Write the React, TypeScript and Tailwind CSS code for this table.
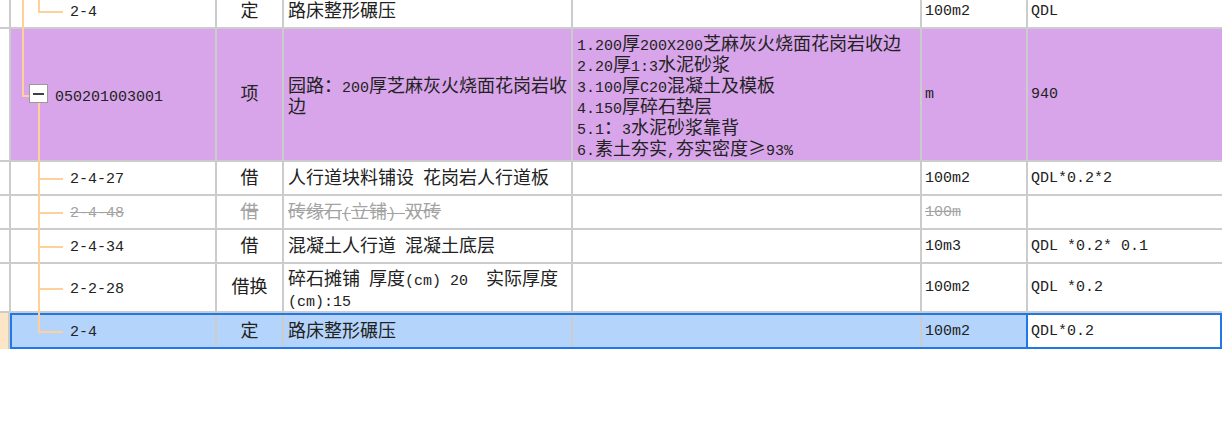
import React from "react";

function T({ s, muted }: { s: string; muted?: boolean }) {
  const parts = s.split(/([\u0000-\u00ff]+)/).filter((p) => p.length > 0);
  return (
    <>
      {parts.map((p, i) =>
        /^[\u0000-\u00ff]+$/.test(p) ? (
          <span
            key={i}
            className={
              muted
                ? "font-['Liberation_Mono',monospace] text-[15px] leading-none whitespace-pre line-through"
                : "font-['Liberation_Mono',monospace] text-[15px] leading-none whitespace-pre"
            }
          >
            {p}
          </span>
        ) : (
          <span key={i} className={muted ? "line-through" : ""}>
            {p}
          </span>
        )
      )}
    </>
  );
}

function Col0({ sel }: { sel?: boolean }) {
  return sel ? (
    <div className="w-[10px] shrink-0 h-full border-r-2 border-[#cccccc] bg-[#fde6c6]" />
  ) : (
    <div className="w-[11px] shrink-0 h-full border-r-2 border-[#cccccc] bg-white" />
  );
}

function ChildTree({
  code,
  last,
  root,
  sel,
  muted,
}: {
  code: string;
  last?: boolean;
  root?: boolean;
  sel?: boolean;
  muted?: boolean;
}) {
  return (
    <div
      className={
        sel
          ? "relative w-[205px] shrink-0 h-full border-r-2 border-[#cccccc] flex items-center pl-[58px] pb-[4px]"
          : "relative w-[206px] shrink-0 h-full border-r-2 border-[#cccccc] flex items-center pl-[59px] pb-[4px]"
      }
    >
      {root && <div className="absolute left-[11px] top-0 bottom-[-2px] w-[2px] bg-[#ffd09a]" />}
      {last ? (
        <div
          className={
            sel
              ? "absolute left-[26px] top-[-4px] h-[calc(50%+4px)] w-[2px] bg-[#ffd09a]"
              : "absolute left-[27px] top-0 h-1/2 w-[2px] bg-[#ffd09a]"
          }
        />
      ) : (
        <div className="absolute left-[27px] top-0 bottom-[-2px] w-[2px] bg-[#ffd09a]" />
      )}
      <div
        className={
          sel
            ? "absolute left-[26px] top-1/2 w-[25px] h-[2px] bg-[#ffd09a]"
            : "absolute left-[27px] top-1/2 w-[25px] h-[2px] bg-[#ffd09a]"
        }
      />
      <span className="relative">
        <T s={code} muted={muted} />
      </span>
    </div>
  );
}

const typeCls =
  "w-[67px] shrink-0 h-full border-r-2 border-[#cccccc] flex items-center justify-center pb-[4px]";
const nameCls =
  "w-[289px] shrink-0 h-full border-r-2 border-[#cccccc] flex flex-col justify-center pl-[4px] whitespace-nowrap";
const featCls =
  "w-[349px] shrink-0 h-full border-r-2 border-[#cccccc] flex flex-col justify-center pl-[4px] whitespace-nowrap";
const unitCls = "w-[106px] shrink-0 h-full border-r-2 border-[#cccccc] flex items-center pl-[3px]";
const exprCls = "flex-1 h-full flex items-center pl-[3px] whitespace-pre";

function Line({ s, muted }: { s: string; muted?: boolean }) {
  return (
    <div className="h-[21px] leading-[21px] whitespace-pre">
      <T s={s} muted={muted} />
    </div>
  );
}

type R = {
  code: string;
  type: string;
  name: string[];
  unit: string;
  expr: string;
  h: string;
  muted?: boolean;
  last?: boolean;
  root?: boolean;
};

function ChildRow({ r }: { r: R }) {
  return (
    <div
      className={
        (r.muted ? "text-[#a3a3a3] " : "text-[#222222] ") +
        "flex shrink-0 border-b-2 border-[#cccccc] bg-white " +
        r.h
      }
    >
      <Col0 />
      <ChildTree code={r.code} last={r.last} root={r.root} muted={r.muted} />
      <div className={typeCls}>
        <T s={r.type} muted={r.muted} />
      </div>
      <div className={r.name.length > 1 ? nameCls : nameCls + " pb-[3px]"}>
        {r.name.map((n, i) => (
          <Line key={i} s={n} muted={r.muted} />
        ))}
      </div>
      <div className={featCls} />
      <div className={unitCls}>
        <T s={r.unit} muted={r.muted} />
      </div>
      <div className={exprCls}>
        <T s={r.expr} muted={r.muted} />
      </div>
    </div>
  );
}

export default function App() {
  const rows: R[] = [
    { code: "2-4-27", type: "借", name: ["人行道块料铺设 花岗岩人行道板"], unit: "100m2", expr: "QDL*0.2*2", h: "h-[34px]" },
    { code: "2-4-48", type: "借", name: ["砖缘石(立铺) 双砖"], unit: "100m", expr: "", h: "h-[34px]", muted: true },
    { code: "2-4-34", type: "借", name: ["混凝土人行道 混凝土底层"], unit: "10m3", expr: "QDL *0.2* 0.1", h: "h-[34px]" },
    {
      code: "2-2-28",
      type: "借换",
      name: ["碎石摊铺 厚度(cm) 20  实际厚度", "(cm):15"],
      unit: "100m2",
      expr: "QDL *0.2",
      h: "h-[49px]",
    },
  ];
  const feat = [
    "1.200厚200X200芝麻灰火烧面花岗岩收边",
    "2.20厚1:3水泥砂浆",
    "3.100厚C20混凝土及模板",
    "4.150厚碎石垫层",
    "5.1：3水泥砂浆靠背",
    "6.素土夯实,夯实密度≥93%",
  ];
  return (
    <div className="w-[1222px] h-[433px] overflow-hidden bg-white flex flex-col font-['Noto_Sans_CJK_SC',sans-serif] text-[18px] leading-[21px] text-[#222222]">
      {/* top clipped row */}
      <div className="-mt-[5px]">
        <ChildRow
          r={{ code: "2-4", type: "定", name: ["路床整形碾压"], unit: "100m2", expr: "QDL", h: "h-[34px]", last: true, root: true }}
        />
      </div>

      {/* purple list row */}
      <div className="flex shrink-0 h-[133px] border-b-2 border-[#cccccc]">
        <Col0 />
        <div className="relative w-[206px] shrink-0 h-full border-r-2 border-[#cccccc] bg-[#d8a5ea] flex items-center pl-[18px] pb-[2px]">
          <div className="absolute left-[11px] top-[-2px] h-[calc(50%+2px)] w-[2px] bg-[#ffd09a]" />
          <div className="absolute left-[11px] top-1/2 w-[8px] h-[2px] bg-[#ffd09a]" />
          <div className="absolute left-[27px] top-[74px] bottom-[-2px] w-[2px] bg-[#ffd09a]" />
          <div className="relative w-[19px] h-[19px] border border-[#9a9a9a] bg-white flex items-center justify-center">
            <div className="w-[11px] h-[2px] bg-[#404040]" />
          </div>
          <span className="ml-[7px]">
            <T s="050201003001" />
          </span>
        </div>
        <div className={typeCls + " bg-[#d8a5ea]"}>项</div>
        <div className={nameCls + " bg-[#d8a5ea]"}>
          <Line s="园路：200厚芝麻灰火烧面花岗岩收" />
          <Line s="边" />
        </div>
        <div className={featCls + " bg-[#d8a5ea]"}>
          {feat.map((f, i) => (
            <Line key={i} s={f} />
          ))}
        </div>
        <div className={unitCls + " bg-[#d8a5ea]"}>
          <T s="m" />
        </div>
        <div className={exprCls + " bg-[#d8a5ea]"}>
          <T s="940" />
        </div>
      </div>

      {rows.map((r, i) => (
        <ChildRow key={i} r={r} />
      ))}

      {/* selected row */}
      <div className="flex shrink-0 h-[36px]">
        <Col0 sel />
        <div className="flex-1 h-full flex border-2 border-[#1f78e6] bg-[#b4d4fb]">
          <ChildTree code="2-4" last sel />
          <div className={typeCls}>定</div>
          <div className={nameCls + " pb-[3px]"}>
            <Line s="路床整形碾压" />
          </div>
          <div className={featCls} />
          <div className="w-[104px] shrink-0 h-full flex items-center pl-[3px]">
            <T s="100m2" />
          </div>
          <div className="flex-1 h-full flex items-center pl-[3px] bg-white border-l-2 border-[#1f78e6]">
            <T s="QDL*0.2" />
          </div>
        </div>
      </div>
    </div>
  );
}
